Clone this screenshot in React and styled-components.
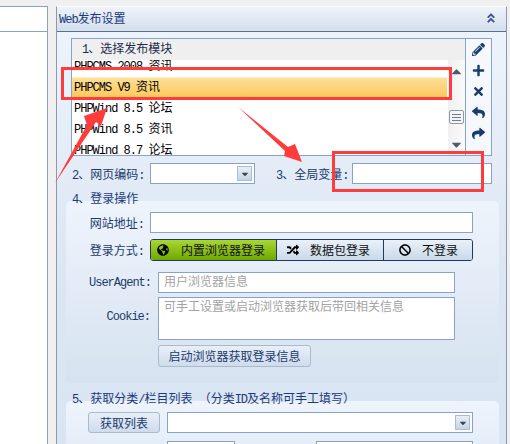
import React from 'react'
import styled, { createGlobalStyle } from 'styled-components'
import { FaPencilAlt, FaPlus, FaTimes, FaReply, FaShare, FaRandom, FaBan, FaGlobeAmericas, FaAngleDoubleUp, FaCaretDown, FaCaretUp } from 'react-icons/fa'

const Global = createGlobalStyle`
  html, body { margin: 0; padding: 0; height: 100%; overflow: hidden; background: #f0f0f0; }
  body { font: 12px "Liberation Mono", "Noto Sans CJK SC", monospace; color: #1c3a6b; }
`
const Page = styled.div`
  position: relative;
  width: 510px;
  height: 444px;
  overflow: hidden;
  display: flex;
  align-items: flex-start;
  padding-top: 6px;
  box-sizing: border-box;
`
// latin text is squeezed to the narrow advance of the original bitmap font
const L = styled.span`
  letter-spacing: -1px;
`
const SidePanel = styled.div`
  width: 48px;
  height: 438px;
  margin-right: 8px;
  background: #fff;
  border-right: 1px solid #8aa3c4;
  border-top: 1px solid #8aa3c4;
  box-sizing: border-box;
  flex: none;
`
const SideHead = styled.div`
  height: 24px;
  border-bottom: 1px solid #8aa3c4;
`
const Panel = styled.div`
  width: 451px;
  height: 438px;
  flex: none;
  box-sizing: border-box;
  border-top: 1px solid #fff;
  border-right: 1px solid #8a99ad;
  border-left: 1px solid #8a99ad;
  overflow: hidden;
`
const PanelHead = styled.div`
  height: 25px;
  box-sizing: border-box;
  background: linear-gradient(#eef3fa, #d3dfed);
  border-bottom: 1px solid #5d7088;
  display: flex;
  align-items: center;
  justify-content: space-between;
  padding: 0 9px 2px 2px;
  font-size: 12px;
  color: #1c3a7b;
  svg { color: #3c5590; font-size: 12px; }
`
const PanelBody = styled.div`
  height: 412px;
  box-sizing: border-box;
  background: linear-gradient(#ecf3fc, #dbe6f3 60%, #d9e5f2);
  padding: 6px 14px 0 14px;
`
const ModuleBox = styled.div`
  display: flex;
  height: 118px;
  box-sizing: border-box;
  border: 1px solid #8aa3c4;
  background: #fff;
`
const ListWrap = styled.div`
  flex: 1;
  min-width: 0;
  display: flex;
  flex-direction: column;
`
const ListHead = styled.div`
  height: 21px;
  flex: none;
  background: #efefef;
  padding: 2px 0 0 10px;
  box-sizing: border-box;
  line-height: 19px;
  color: #1c2c4c;
`
const ListMain = styled.div`
  flex: 1;
  display: flex;
  min-height: 0;
`
const Rows = styled.div`
  flex: 1;
  overflow: hidden;
`
const RowsInner = styled.div`
  margin-top: -4px;
`
const Row = styled.div`
  height: 21px;
  line-height: 22px;
  padding-left: 2px;
  margin-right: 1px;
  color: #000;
  white-space: pre;
  ${p => p.$selected && 'background: linear-gradient(#fde09a, #fbc85a); box-shadow: inset 0 1px 0 #fdeec8;'}
`
const ScrollBar = styled.div`
  width: 17px;
  flex: none;
  background: linear-gradient(90deg, #f0f0f0, #fafafa);
  display: flex;
  flex-direction: column;
  align-items: center;
  justify-content: space-between;
  padding: 4px 0 3px;
  box-sizing: border-box;
  color: #4e5a68;
  svg { font-size: 15px; }
`
const Thumb = styled.div`
  width: 15px;
  height: 14px;
  border: 1px solid #8d99a8;
  border-radius: 2px;
  background: repeating-linear-gradient(#6f7d8d 0 1px, #f2f2f2 1px 3px);
  background-clip: content-box;
  padding: 2px;
  box-sizing: border-box;
  margin-top: 18px;
`
const Tools = styled.div`
  width: 25px;
  flex: none;
  border-left: 1px solid #8aa3c4;
  display: flex;
  flex-direction: column;
  align-items: center;
  gap: 8px;
  padding-top: 4px;
  background: #f5f8fc;
  color: #183c6e;
  svg { font-size: 13px; display: block; }
`
const FieldRow = styled.div`
  display: flex;
  align-items: ${p => p.$align || 'center'};
  margin-top: ${p => p.$top || 0}px;
  margin-left: ${p => p.$left || 0}px;
`
const Label = styled.span`
  white-space: pre;
  width: ${p => p.$w ? `${p.$w}px` : 'auto'};
  text-align: ${p => p.$right ? 'right' : 'left'};
  padding-right: ${p => p.$pr || 0}px;
  margin-left: ${p => p.$ml || 0}px;
  margin-top: ${p => p.$mt || 0}px;
  box-sizing: border-box;
  flex: none;
  color: #1c3a6b;
`
const Input = styled.div`
  width: ${p => p.$w}px;
  height: ${p => p.$h || 21}px;
  flex: none;
  box-sizing: border-box;
  border: 1px solid #8aa3c4;
  background: #fff;
  margin-left: ${p => p.$left || 0}px;
  color: #a3a3a3;
  padding: 3px 5px;
  line-height: 15px;
`
const DropButton = styled.div`
  width: 15px;
  height: 15px;
  border: 1px solid #a9bdd8;
  background: linear-gradient(#e8eff8, #c4d4e8);
  position: absolute;
  top: 2px;
  right: 2px;
  display: flex;
  align-items: center;
  justify-content: center;
  color: #444;
  box-sizing: border-box;
  svg { font-size: 10px; }
`
const SelectBox = styled(Input)`
  position: relative;
`
const GroupTitle = styled.div`
  margin-top: ${p => p.$top}px;
  margin-left: 1px;
  height: 14px;
  line-height: 14px;
  white-space: pre;
  position: relative;
  z-index: 1;
  color: #1c3a7b;
`
const Group = styled.div`
  margin: ${p => p.$pull}px -7px 0 -5px;
  padding: 11px 26px 0 23px;
  height: ${p => p.$h}px;
  box-sizing: border-box;
  border-radius: 5px;
  background: ${p => p.$bg};
`
const LoginButtons = styled.div`
  display: flex;
  height: 22px;
  width: 323px;
  flex: none;
  box-sizing: border-box;
  border: 1px solid #1f3a5c;
  border-radius: 3px;
  overflow: hidden;
`
const LoginButton = styled.div`
  width: ${p => p.$w}px;
  flex: none;
  box-sizing: border-box;
  display: flex;
  align-items: center;
  padding-left: ${p => p.$pad}px;
  gap: ${p => p.$gap}px;
  color: #111;
  background: ${p => p.$active ? 'linear-gradient(#a9d733, #6fa800)' : 'linear-gradient(#eaf1f9, #c9d9e9)'};
  border-left: ${p => p.$first ? 'none' : '1px solid #1f3a5c'};
  svg { font-size: 12px; color: #000; flex: none; }
`
const PlainButton = styled.div`
  width: ${p => p.$w}px;
  height: ${p => p.$h || 22}px;
  margin-left: ${p => p.$left || 0}px;
  flex: none;
  box-sizing: border-box;
  border: 1px solid #a9bacd;
  border-radius: 3px;
  background: linear-gradient(#e8eff8, #cfdcec);
  display: flex;
  align-items: center;
  justify-content: center;
  color: #1c3a6b;
`
const Overlay = styled.svg`
  position: absolute;
  left: 0;
  top: 0;
  pointer-events: none;
`

const rows = [
  ['PHPCMS 2008 ', '资讯'],
  ['PHPCMS V9 ', '资讯'],
  ['PHPWind 8.5 ', '论坛'],
  ['PHPWind 8.5 ', '资讯'],
  ['PHPWind 8.7 ', '论坛'],
]

export default function App() {
  return (
    <Page>
      <Global />
      <SidePanel><SideHead /></SidePanel>
      <Panel>
        <PanelHead><span><L>Web</L>发布设置</span><FaAngleDoubleUp /></PanelHead>
        <PanelBody>
          <ModuleBox>
            <ListWrap>
              <ListHead><L>1</L>、选择发布模块</ListHead>
              <ListMain>
                <Rows>
                  <RowsInner>
                    {rows.map((r, i) => <Row key={i} $selected={i === 1}><L>{r[0]}</L>{r[1]}</Row>)}
                  </RowsInner>
                </Rows>
                <ScrollBar>
                  <FaCaretUp />
                  <Thumb />
                  <FaCaretDown />
                </ScrollBar>
              </ListMain>
            </ListWrap>
            <Tools>
              <FaPencilAlt />
              <FaPlus />
              <FaTimes />
              <FaReply />
              <FaShare />
            </Tools>
          </ModuleBox>

          <FieldRow $top={7} $left={1}>
            <Label $w={78}><L>2</L>、网页编码<L>:</L></Label>
            <SelectBox $w={105}><DropButton><FaCaretDown /></DropButton></SelectBox>
            <Label $w={76} $ml={21}><L>3</L>、全局变量<L>:</L></Label>
            <Input $w={140} />
          </FieldRow>

          <GroupTitle $top={9}><L>4</L>、登录操作</GroupTitle>
          <Group $pull={-6} $h={182} $bg="linear-gradient(#eef4fc, #d6e2f0)">
            <FieldRow>
              <Label $w={61} $right $pr={6}>网站地址<L>:</L></Label>
              <Input $w={323} />
            </FieldRow>
            <FieldRow $top={6}>
              <Label $w={61} $right $pr={6}>登录方式<L>:</L></Label>
              <LoginButtons>
                <LoginButton $first $active $w={125} $pad={6} $gap={12}><FaGlobeAmericas />内置浏览器登录</LoginButton>
                <LoginButton $w={107} $pad={10} $gap={11}><FaRandom />数据包登录</LoginButton>
                <LoginButton $w={91} $pad={15} $gap={11}><FaBan />不登录</LoginButton>
              </LoginButtons>
            </FieldRow>
            <FieldRow $top={11}>
              <Label $w={61} $right><L>UserAgent:</L></Label>
              <Input $w={297} $left={8}>用户浏览器信息</Input>
            </FieldRow>
            <FieldRow $top={4} $align="flex-start">
              <Label $w={61} $right $mt={13}><L>Cookie:</L></Label>
              <Input $w={297} $h={43} $left={8}>可手工设置或启动浏览器获取后带回相关信息</Input>
            </FieldRow>
            <FieldRow $top={5}>
              <PlainButton $w={153} $left={69}>启动浏览器获取登录信息</PlainButton>
            </FieldRow>
          </Group>

          <GroupTitle $top={10}><L>5</L>、获取分类<L>/</L>栏目列表<L> </L>（分类<L>ID</L>及名称可手工填写）</GroupTitle>
          <Group $pull={-6} $h={80} $bg="linear-gradient(#eef4fc, #dde8f4)">
            <FieldRow>
              <PlainButton $w={72} $h={21} $left={-1}>获取列表</PlainButton>
              <SelectBox $w={306} $left={7}><DropButton><FaCaretDown /></DropButton></SelectBox>
            </FieldRow>
            <FieldRow $top={8}>
              <Input $w={68} $left={78} />
              <Input $w={157} $left={81} />
            </FieldRow>
          </Group>
        </PanelBody>
      </Panel>

      <Overlay width="510" height="444" viewBox="0 0 510 444">
        <rect x="62.5" y="68.5" width="388" height="30" fill="none" stroke="#ff3b3b" strokeWidth="3" />
        <rect x="333.5" y="152.5" width="149" height="38" fill="none" stroke="#ff3b3b" strokeWidth="3" />
        <polygon points="55,183 87,125 84,116 107,108 101,126 96,122" fill="#ff3b3b" />
        <polygon points="238,107 288,147 295,144 302,162 284,156 285,151" fill="#ff3b3b" />
      </Overlay>
    </Page>
  )
}
